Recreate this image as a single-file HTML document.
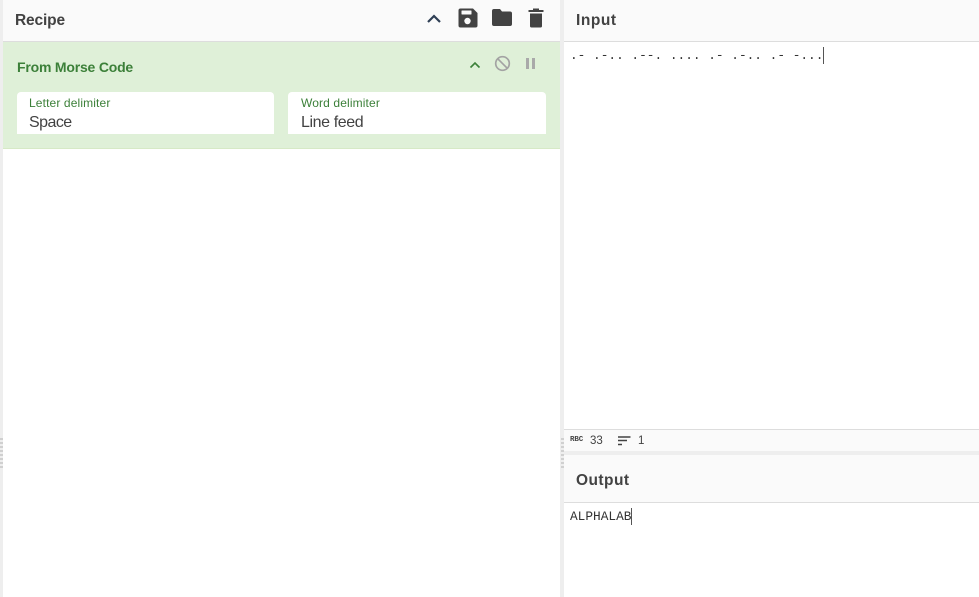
<!DOCTYPE html>
<html>
<head>
<meta charset="utf-8">
<style>
html,body{margin:0;padding:0;width:979px;height:597px;overflow:hidden;background:#fff;font-family:"Liberation Sans",sans-serif;}
.a{position:absolute;}
.t{position:absolute;white-space:nowrap;}
svg{position:absolute;display:block;}
.title{font-weight:bold;font-size:15.5px;color:#424242;line-height:20px;}
.mono{font-family:"Liberation Mono",monospace;}
.dots{position:absolute;width:3px;height:24px;background:repeating-linear-gradient(to bottom,#d0d0d0 0 2px,transparent 2px 4px);}
</style>
</head>
<body>
<!-- Left gutter -->
<div class="a" style="left:0;top:0;width:3px;height:597px;background:#eeeeee"></div>
<div class="dots" style="left:0;top:438px;height:30px"></div>
<!-- Middle gutter -->
<div class="a" style="left:560px;top:0;width:4px;height:597px;background:#eeeeee"></div>

<!-- Recipe header -->
<div class="a" style="left:3px;top:0;width:557px;height:41px;background:#fafafa;border-bottom:1px solid #dddddd"></div>
<div class="t title" style="left:15px;top:11px;letter-spacing:-0.15px">Recipe</div>
<svg style="left:426px;top:12px" width="16" height="12" viewBox="0 0 16 12"><path d="M2 10 L8 4 L14 10" fill="none" stroke="#2f3f55" stroke-width="2.2"/></svg>
<svg style="left:458px;top:8px" width="20" height="20" viewBox="0 0 20 20"><path d="M2.5 0.5 H15 L19.5 5 V17.5 Q19.5 19.5 17.5 19.5 H2.5 Q0.5 19.5 0.5 17.5 V2.5 Q0.5 0.5 2.5 0.5 Z" fill="#424242"/><rect x="3.5" y="2.5" width="10" height="4" rx="0.5" fill="#fafafa"/><circle cx="9.5" cy="13" r="3.2" fill="#fafafa"/></svg>
<svg style="left:492px;top:9px" width="20" height="17" viewBox="0 0 20 17"><path d="M2 0 H8 L10 2.5 H18 Q20 2.5 20 4.5 V15 Q20 17 18 17 H2 Q0 17 0 15 V2 Q0 0 2 0 Z" fill="#424242"/></svg>
<svg style="left:528px;top:8px" width="16" height="20" viewBox="0 0 16 20"><rect x="0.5" y="2" width="15" height="2" fill="#424242"/><rect x="5" y="0.5" width="6" height="2" fill="#424242"/><path d="M2 5.5 H14 V18 Q14 19.5 12.5 19.5 H3.5 Q2 19.5 2 18 Z" fill="#424242"/></svg>

<!-- Operation -->
<div class="a" style="left:3px;top:42px;width:557px;height:106px;background:#dff0d8;border-bottom:1px solid #d6e9c6"></div>
<div class="t" style="left:17px;top:58px;font-weight:bold;font-size:14px;line-height:18px;color:#3c8039;letter-spacing:-0.2px">From Morse Code</div>
<svg style="left:469px;top:60px" width="12" height="9" viewBox="0 0 12 9"><path d="M1.5 7.5 L6 3 L10.5 7.5" fill="none" stroke="#3c8039" stroke-width="1.6"/></svg>
<svg style="left:494px;top:55px" width="17" height="17" viewBox="0 0 17 17"><circle cx="8.5" cy="8.5" r="6.8" fill="none" stroke="#a3a3a3" stroke-width="1.7"/><path d="M3.7 3.7 L13.3 13.3" stroke="#a3a3a3" stroke-width="1.7"/></svg>
<div class="a" style="left:526px;top:58px;width:3px;height:11px;background:#a9a9a9"></div>
<div class="a" style="left:532px;top:58px;width:3px;height:11px;background:#a9a9a9"></div>

<!-- Fields -->
<div class="a" style="left:17px;top:92px;width:257px;height:42px;background:#fff;border-radius:4px 4px 0 0"></div>
<div class="t" style="left:29px;top:96px;font-size:12px;line-height:15px;color:#3c8039;letter-spacing:0.13px">Letter delimiter</div>
<div class="t" style="left:29px;top:113px;font-size:16px;line-height:19px;color:#424242;letter-spacing:-0.55px">Space</div>
<div class="a" style="left:288px;top:92px;width:258px;height:42px;background:#fff;border-radius:4px 4px 0 0"></div>
<div class="t" style="left:301px;top:96px;font-size:12px;line-height:15px;color:#3c8039;letter-spacing:0.13px">Word delimiter</div>
<div class="t" style="left:301px;top:113px;font-size:16px;line-height:19px;color:#424242;letter-spacing:-0.4px">Line feed</div>

<!-- Input -->
<div class="a" style="left:564px;top:0;width:415px;height:41px;background:#fafafa;border-bottom:1px solid #dddddd"></div>
<div class="t title" style="left:576px;top:11px;letter-spacing:0.55px">Input</div>
<div class="t mono" style="left:570px;top:48px;font-size:12.8px;line-height:16px;color:#333">.- .-.. .--. .... .- .-.. .- -...</div>
<div class="a" style="left:823px;top:47px;width:1px;height:17px;background:#555"></div>

<!-- Status bar -->
<div class="a" style="left:564px;top:429px;width:415px;height:21px;background:#fafafa;border-top:1px solid #dddddd"></div>
<div class="t mono" style="left:570px;top:437px;font-size:7.5px;line-height:7px;font-weight:bold;color:#444;letter-spacing:-0.1px">RBC</div>
<div class="t" style="left:590px;top:434px;font-size:11.5px;line-height:14px;color:#424242">33</div>
<svg style="left:618px;top:436px" width="13" height="10" viewBox="0 0 13 10"><path d="M0 1 H12.5 M0 4.5 H9 M0 8.5 H4" stroke="#424242" stroke-width="1.4"/></svg>
<div class="t" style="left:638px;top:434px;font-size:11.5px;line-height:14px;color:#424242">1</div>
<div class="a" style="left:564px;top:451px;width:415px;height:4px;background:#eeeeee"></div>
<div class="dots" style="left:561px;top:438px;height:30px"></div>

<!-- Output -->
<div class="a" style="left:564px;top:455px;width:415px;height:47px;background:#fafafa;border-bottom:1px solid #dddddd"></div>
<div class="t title" style="left:576px;top:471px;letter-spacing:0.45px">Output</div>
<div class="t mono" style="left:570px;top:509px;font-size:12.8px;line-height:16px;color:#333">ALPHALAB</div>
<div class="a" style="left:631px;top:508px;width:1px;height:17px;background:#555"></div>
</body>
</html>
